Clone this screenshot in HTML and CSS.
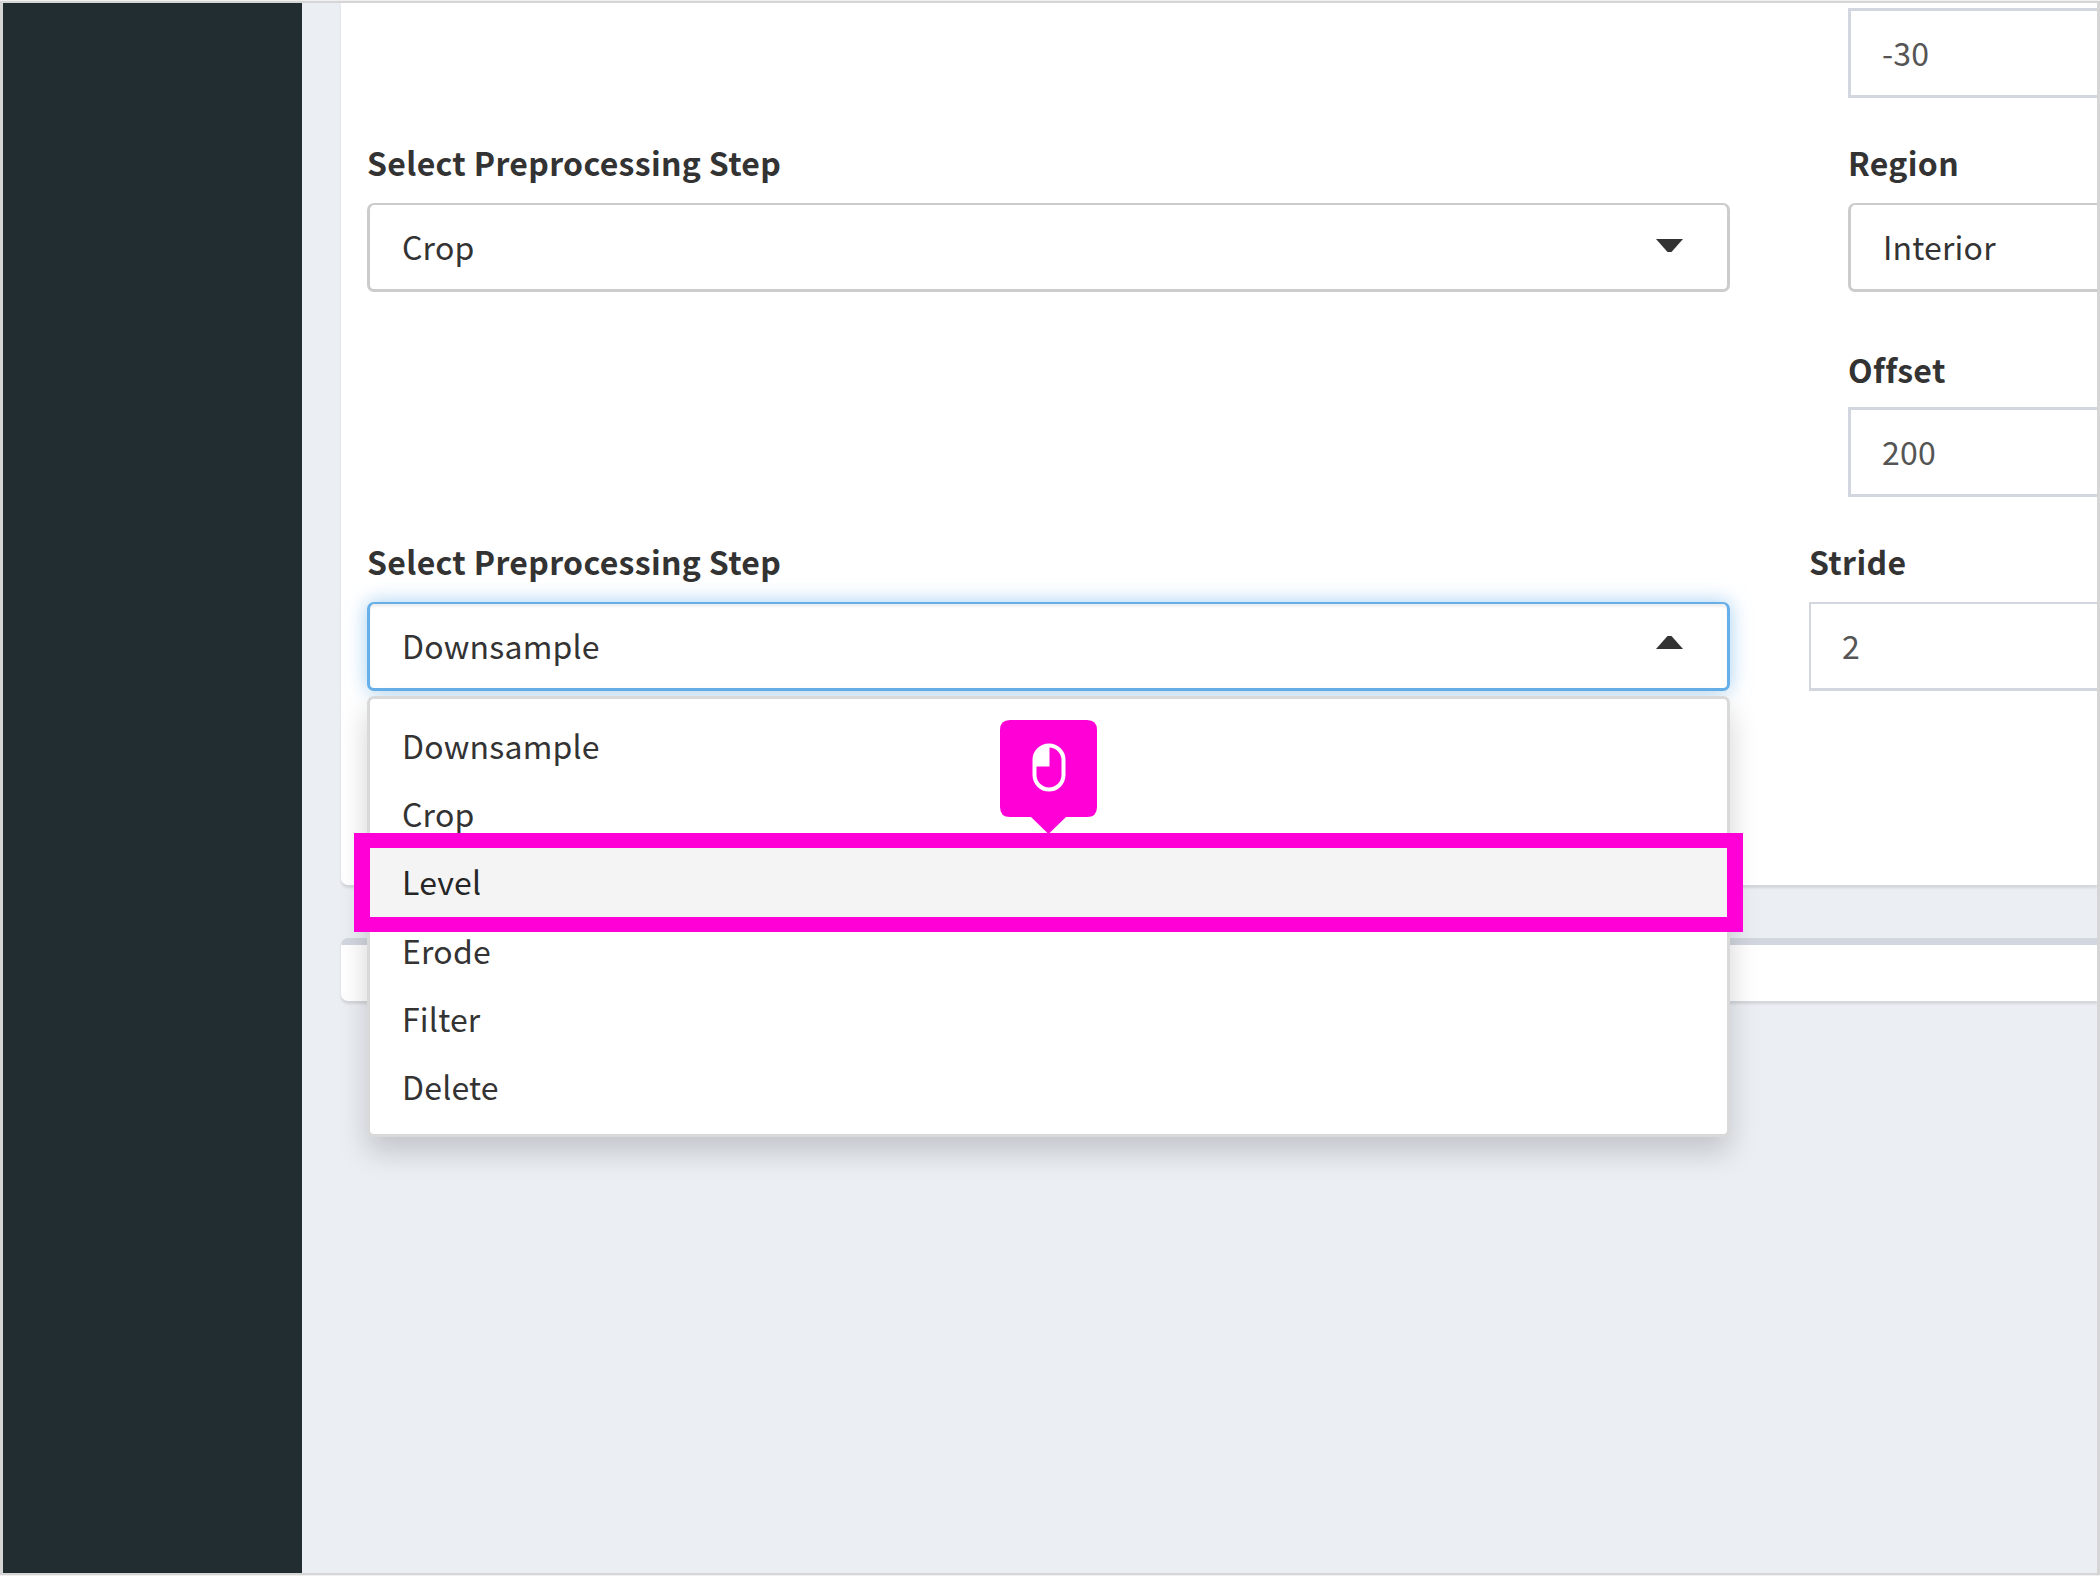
FILE: index.html
```
<!DOCTYPE html>
<html lang="en">
<head>
<meta charset="utf-8">
<title>Preprocessing</title>
<link rel="stylesheet" href="styles.css">
</head>
<body>
<div class="frame">
  <aside class="sidebar"></aside>
  <main class="content">
    <section class="panel">
      <div class="row">
        <div class="col-step"></div>
        <div class="col-param"><div class="input">-30</div></div>
      </div>
      <div class="row row-gap">
        <div class="col-step">
          <div class="label">Select Preprocessing Step</div>
          <div class="select"><span>Crop</span><svg class="caret" viewBox="0 0 27 13"><path d="M0 0H27L15.500 13H11.500Z"/></svg></div>
        </div>
        <div class="col-param">
          <div class="label">Region</div>
          <div class="select select-cut"><span>Interior</span></div>
          <div class="label label-offset">Offset</div>
          <div class="input">200</div>
        </div>
      </div>
      <div class="row row-gap row-stride">
        <div class="col-step">
          <div class="label">Select Preprocessing Step</div>
          <div class="select select-open"><span>Downsample</span><svg class="caret caret-up" viewBox="0 0 27 13"><path d="M0 13H27L15.500 0H11.500Z"/></svg></div>
          <ul class="menu">
            <li>Downsample</li>
            <li>Crop</li>
            <li class="active">Level</li>
            <li>Erode</li>
            <li>Filter</li>
            <li>Delete</li>
          </ul>
          <div class="highlight"></div>
          <svg class="click-hint" viewBox="0 0 97 114">
            <path fill="#ff00d6" d="M10 0H87Q97 0 97 10V87Q97 97 87 97H66L48.500 114L31 97H10Q0 97 0 87V10Q0 0 10 0Z"/>
            <rect x="34.500" y="25.500" width="29" height="44" rx="14.500" fill="none" stroke="#fff" stroke-width="4"/>
            <path fill="#fff" d="M49.500 25V46.500H34.500V40Q34.500 25 49.500 25Z"/>
          </svg>
        </div>
        <div class="col-param">
          <div class="label">Stride</div>
          <div class="input input-thin">2</div>
        </div>
      </div>
    </section>
    <section class="box"></section>
  </main>
</div>
</body>
</html>
```
FILE: styles.css
```
* { box-sizing: border-box; }
body {
  margin: 0;
  background: #f0f0f0;
  font-family: "Noto Sans CJK JP", "Noto Sans", sans-serif;
  font-size: 32px;
  letter-spacing: .2px;
  color: #333;
}
.frame {
  display: flex;
  width: 2100px;
  height: 1574px;
  margin: 1px 0;
  border: 3px solid #d5d5d5;
  border-top-width: 2px;
  border-bottom-width: 2px;
  overflow: hidden;
}
.sidebar { flex: none; width: 299px; background: #222d32; }
.content { flex: 1; min-width: 0; padding-left: 39px; background: #ebeff4; }
.panel {
  height: 882px;
  padding: 5px 0 0 26px;
  background: #fff;
  border-radius: 0 0 0 7px;
  box-shadow: 0 2.500px 2.500px rgba(0, 0, 0, .1);
}
.row { display: flex; gap: 118px; }
.row-gap { margin-top: 43px; }
.row-stride { gap: 79px; }
.col-step { position: relative; flex: none; width: 1363px; }
.col-param { flex: 1; min-width: 0; }
.label {
  height: 44px;
  margin-bottom: 18px;
  line-height: 43px;
  font-weight: 700;
  letter-spacing: .33px;
  white-space: nowrap;
}
.label-offset { margin: 56px 0 15px; }
.select, .input {
  display: flex;
  align-items: center;
  justify-content: space-between;
  height: 89px;
  border: 3px solid #ccc;
  border-top-width: 2px;
  background: #fff;
  padding: 0 44px 3px 32px;
  white-space: nowrap;
}
.select { border-radius: 7px; }
.select-cut { border-right: 0; border-radius: 7px 0 0 7px; }
.select-open {
  border-color: #66afe9;
  box-shadow: inset 0 2.500px 2.500px rgba(0, 0, 0, .075), 0 0 20px rgba(102, 175, 233, .6);
}
.input { height: 90px; border-color: #d2d6de; border-top-width: 3px; border-right: 0; color: #555; padding-left: 31px; }
.input-thin { height: 89px; border-top-width: 2px; border-left-width: 2px; }
.caret { width: 27px; height: 13px; margin-top: -1px; fill: #333; }
.caret-up { margin-top: -5px; }
.menu {
  position: absolute;
  left: 0;
  top: 156px;
  width: 1363px;
  height: 441px;
  margin: 0;
  padding: 12.700px 0 0;
  list-style: none;
  background: #fff;
  border: 3px solid #d9d9d9;
  border-radius: 7px;
  box-shadow: 0 14.600px 29px rgba(0, 0, 0, .175);
}
.menu li { height: 68.300px; line-height: 67.300px; padding-left: 32px; }
.menu .active { background: #f4f4f4; color: #262626; }
.highlight {
  position: absolute;
  left: -13px;
  top: 293px;
  width: 1389px;
  height: 99px;
  border: 15px solid #ff00d6;
  border-left-width: 16px;
  border-right-width: 16px;
}
.click-hint { position: absolute; left: 633px; top: 180px; width: 97px; height: 114px; }
.box {
  height: 63px;
  margin-top: 53px;
  background: #fff;
  border-top: 7px solid #d2d6de;
  border-radius: 7px 0 0 7px;
  box-shadow: 0 2.500px 2.500px rgba(0, 0, 0, .1);
}
```
